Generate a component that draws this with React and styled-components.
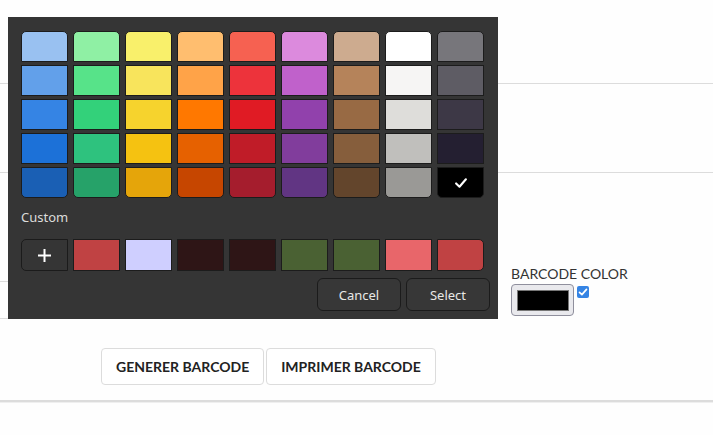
import React from "react";
import styled, { createGlobalStyle } from "styled-components";

const GlobalStyle = createGlobalStyle`
  body {
    margin: 0;
    background: #fefefe;
    font-family: Lato, "Liberation Sans", sans-serif;
  }
`;

const Page = styled.div`
  position: relative;
  width: 100%;
  height: 435px;
  overflow: hidden;
`;

const Field = styled.div`
  height: ${(p) => p.$h}px;
  border-bottom: 1px solid #dcdcdc;
`;

const Middle = styled.div`
  display: flex;
`;

const LeftCol = styled.div`
  width: 490px;
`;

const RightCol = styled.div`
  display: flex;
  flex-direction: column;
  justify-content: flex-end;
  padding: 0 0 3px 21px;
`;

const Label = styled.div`
  font-size: 14px;
  line-height: 17px;
  color: #333;
  margin-bottom: 2px;
`;

const ControlRow = styled.div`
  display: flex;
  align-items: flex-start;
  gap: 3px;
`;

const ColorWell = styled.div`
  width: 63px;
  height: 32px;
  box-sizing: border-box;
  border: 1px solid #8f8f9d;
  border-radius: 4px;
  background: #e9e9ed;
  padding: 5px 4px 4px 5px;
  display: flex;
`;

const WellInner = styled.div`
  flex: 1;
  background: #000;
  border: 1px solid #777;
`;

const CheckBox = styled.span`
  width: 12px;
  height: 12px;
  margin-top: 2px;
  border-radius: 2px;
  background: #3584e4;
  display: flex;
  align-items: center;
  justify-content: center;
`;

const Actions = styled.div`
  display: flex;
  gap: 2px;
  padding: 29px 0 15px 101px;
  border-bottom: 2px solid #dcdcdc;
  box-shadow: 0 1px 0 #efefef;
`;

const ActionButton = styled.button`
  height: 37px;
  padding: 0 14px;
  background: #fff;
  border: 1px solid #dcdcdc;
  border-radius: 4px;
  font-family: Lato, "Liberation Sans", sans-serif;
  font-weight: 700;
  font-size: 14px;
  color: #222;
  text-transform: uppercase;
`;

const Dialog = styled.div`
  position: absolute;
  top: 17px;
  left: 8px;
  width: 490px;
  height: 302px;
  box-sizing: border-box;
  background: #353535;
  padding: 14px 13px 8px 13px;
  display: flex;
  flex-direction: column;
  font-family: "Noto Sans", "Open Sans", sans-serif;
`;

const Palette = styled.div`
  display: flex;
  gap: 5px;
`;

const Column = styled.div`
  display: flex;
  flex-direction: column;
  gap: 3px;
  & > :first-child {
    border-radius: 5px 5px 0 0;
  }
  & > :last-child {
    border-radius: 0 0 5px 5px;
  }
`;

const Swatch = styled.div`
  width: 47px;
  height: ${(p) => p.$h || 31}px;
  box-sizing: border-box;
  border: 1px solid #1c1c1c;
  background: ${(p) => p.$color};
  display: flex;
  align-items: center;
  justify-content: center;
`;

const CustomLabel = styled.div`
  margin-top: 11px;
  font-size: 13px;
  line-height: 16px;
  color: #dcdcda;
`;

const CustomRow = styled.div`
  display: flex;
  gap: 5px;
  margin-top: 14px;
  & > :first-child {
    border-radius: 5px 0 0 5px;
  }
  & > :last-child {
    border-radius: 0 5px 5px 0;
  }
`;

const AddButton = styled(Swatch)`
  background: #353535;
  border-color: #1b1b1b;
`;

const Footer = styled.div`
  display: flex;
  justify-content: flex-end;
  gap: 5px;
  margin: 7px -5px 0 0;
`;

const DialogButton = styled.button`
  width: 84px;
  height: 33px;
  background: #373737;
  border: 1px solid #1b1b1b;
  border-radius: 6px;
  color: #e8e8e6;
  font-family: "Noto Sans", "Open Sans", sans-serif;
  font-size: 13px;
`;

const palette = [
  ["#99c1f1", "#62a0ea", "#3584e4", "#1c71d8", "#1a5fb4"],
  ["#8ff0a4", "#57e389", "#33d17a", "#2ec27e", "#26a269"],
  ["#f9f06b", "#f8e45c", "#f6d32d", "#f5c211", "#e5a50a"],
  ["#ffbe6f", "#ffa348", "#ff7800", "#e66100", "#c64600"],
  ["#f66151", "#ed333b", "#e01b24", "#c01c28", "#a51d2d"],
  ["#dc8add", "#c061cb", "#9141ac", "#813d9c", "#613583"],
  ["#cdab8f", "#b5835a", "#986a44", "#865e3c", "#63452c"],
  ["#ffffff", "#f6f5f4", "#deddda", "#c0bfbc", "#9a9996"],
  ["#77767b", "#5e5c64", "#3d3846", "#241f31", "#000000"],
];

const custom = [
  "#c04243",
  "#cfcfff",
  "#2e1516",
  "#2e1516",
  "#4a6133",
  "#4a6133",
  "#e8666a",
  "#c04243",
];

function Check({ size = 12, stroke = 2 }) {
  return (
    <svg width={size} height={size} viewBox="0 0 12 12" fill="none">
      <path
        d="M1.8 6.4 L4.7 9.2 L10.2 2.8"
        stroke="#fff"
        strokeWidth={stroke}
        strokeLinecap="round"
        strokeLinejoin="round"
      />
    </svg>
  );
}

function App() {
  return (
    <Page>
      <GlobalStyle />
      <Field $h={83} />
      <Field $h={88} />
      <Middle>
        <LeftCol>
          <Field $h={108} />
          <Field $h={36} />
        </LeftCol>
        <RightCol>
          <Label>BARCODE COLOR</Label>
          <ControlRow>
            <ColorWell>
              <WellInner />
            </ColorWell>
            <CheckBox>
              <Check size={10} stroke={2} />
            </CheckBox>
          </ControlRow>
        </RightCol>
      </Middle>
      <Actions>
        <ActionButton>Generer barcode</ActionButton>
        <ActionButton>Imprimer barcode</ActionButton>
      </Actions>

      <Dialog>
        <Palette>
          {palette.map((col, i) => (
            <Column key={i}>
              {col.map((c) => (
                <Swatch key={c} $color={c}>
                  {c === "#000000" && <Check size={14} stroke={1.8} />}
                </Swatch>
              ))}
            </Column>
          ))}
        </Palette>
        <CustomLabel>Custom</CustomLabel>
        <CustomRow>
          <AddButton $h={32}>
            <svg width="15" height="15" viewBox="0 0 15 15">
              <path d="M7.5 1 V14 M1 7.5 H14" stroke="#fff" strokeWidth="2" />
            </svg>
          </AddButton>
          {custom.map((c, i) => (
            <Swatch key={i} $h={32} $color={c} />
          ))}
        </CustomRow>
        <Footer>
          <DialogButton>Cancel</DialogButton>
          <DialogButton>Select</DialogButton>
        </Footer>
      </Dialog>
    </Page>
  );
}

export default App;
